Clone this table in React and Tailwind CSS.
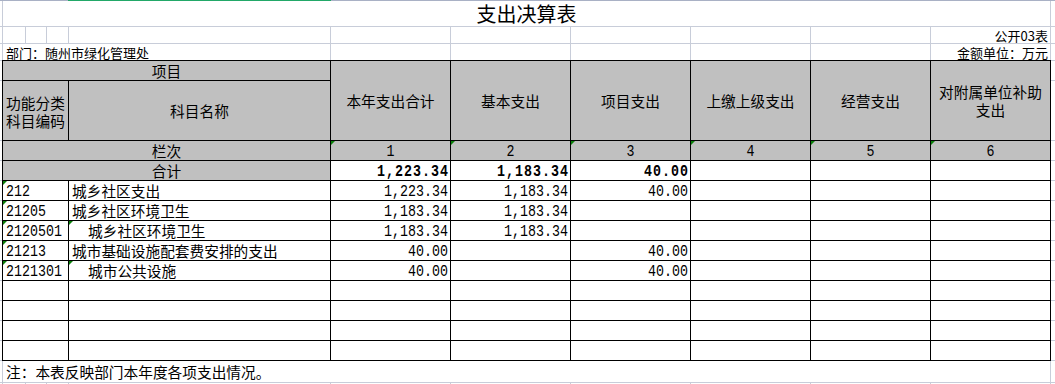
import React from "react";

function Tri() {
  return (
    <span className="absolute left-0 top-0 h-0 w-0 border-t-[4px] border-r-[4px] border-t-[#0a800a] border-r-transparent" />
  );
}

function C({ cls = "", tri = false, children }) {
  return (
    <div className={"relative flex items-center border-r border-b border-black " + cls}>
      {tri && <Tri />}
      {children}
    </div>
  );
}

function Gut({ top = false }) {
  return <div className={top ? "border-t border-b border-[#c8cdd9]" : "border-b border-[#c8cdd9]"} />;
}

function Num({ children, bold = false }) {
  return (
    <span
      className={
        bold
          ? "ml-auto inline-block origin-center scale-y-[1.2] pt-[3px] pr-[1px] font-['Liberation_Mono',monospace] text-[13.33px] font-bold tracking-[1px]"
          : "ml-auto inline-block origin-center scale-y-[1.2] pt-[3px] pr-[2px] font-['Liberation_Mono',monospace] text-[13.33px]"
      }
    >
      {children}
    </span>
  );
}

function Code({ children }) {
  return (
    <span className="inline-block origin-center scale-y-[1.2] pt-[3px] pl-[3px] font-['Liberation_Mono',monospace] text-[13.33px]">
      {children}
    </span>
  );
}

const rows = [
  { code: "212", name: "城乡社区支出", indent: false, v: ["1,223.34", "1,183.34", "40.00"] },
  { code: "21205", name: "城乡社区环境卫生", indent: false, v: ["1,183.34", "1,183.34", ""] },
  { code: "2120501", name: "城乡社区环境卫生", indent: true, v: ["1,183.34", "1,183.34", ""] },
  { code: "21213", name: "城市基础设施配套费安排的支出", indent: false, v: ["40.00", "", "40.00"] },
  { code: "2121301", name: "城市公共设施", indent: true, v: ["40.00", "", "40.00"] },
];

const heads = ["本年支出合计", "基本支出", "项目支出", "上缴上级支出", "经营支出"];

export default function App() {
  return (
    <div className="relative h-[384px] w-[1055px] overflow-hidden bg-white text-black font-['Noto_Sans_CJK_SC',sans-serif]">
      {/* selection marker on top edge */}
      <div className="absolute left-[68px] top-0 h-px w-[263px] bg-[#22a868]" />

      {/* title row */}
      <div className="grid h-[27px] grid-cols-[2px_1049px_4px] border-t border-b border-t-[#a9b1c5] border-b-[#c8cdd9]">
        <div />
        <div className="flex items-end justify-center border-l border-r border-[#c8cdd9] pb-[1px] text-[20px] leading-[22px]">
          支出决算表
        </div>
        <div />
      </div>

      {/* meta row 1 */}
      <div className="grid h-[17px] grid-cols-[2px_24px_21px_22px_262px_120px_120px_120px_120px_120px_120px_4px] border-b border-[#c8cdd9] text-[13px]">
        <div />
        <div className="border-l border-r border-[#c8cdd9]" />
        <div className="border-r border-[#c8cdd9]" />
        <div className="border-r border-[#c8cdd9]" />
        <div className="border-r border-[#c8cdd9]" />
        <div className="border-r border-[#c8cdd9]" />
        <div className="border-r border-[#c8cdd9]" />
        <div className="border-r border-[#c8cdd9]" />
        <div className="border-r border-[#c8cdd9]" />
        <div className="border-r border-[#c8cdd9]" />
        <div className="flex items-end justify-end border-r border-[#c8cdd9] pr-[2px] leading-[15px]">公开03表</div>
        <div />
      </div>

      {/* meta row 2 */}
      <div className="grid h-[16px] grid-cols-[2px_24px_21px_22px_262px_120px_120px_120px_120px_120px_120px_4px] text-[13px]">
        <div />
        <div className="col-span-4 flex items-end whitespace-nowrap border-l border-r border-[#c8cdd9] pl-[3px] leading-[15px]">
          部门：随州市绿化管理处
        </div>
        <div className="border-r border-[#c8cdd9]" />
        <div className="border-r border-[#c8cdd9]" />
        <div className="border-r border-[#c8cdd9]" />
        <div className="border-r border-[#c8cdd9]" />
        <div className="border-r border-[#c8cdd9]" />
        <div className="flex items-end justify-end border-r border-[#c8cdd9] pr-[2px] leading-[15px]">金额单位：万元</div>
        <div />
      </div>

      {/* main table */}
      <div className="grid grid-cols-[2px_67px_262px_120px_120px_120px_120px_120px_120px_4px] grid-rows-[21px_60px_repeat(11,20px)] text-[14.7px] leading-[18px]">
        {/* header row 1 */}
        <Gut top />
        <C cls="col-span-2 justify-center border-l border-t bg-[#c0c0c0]">
          <span>项目</span>
        </C>
        {heads.map((h) => (
          <C key={h} cls="row-span-2 justify-center border-t bg-[#c0c0c0]">
            <span>{h}</span>
          </C>
        ))}
        <C cls="row-span-2 justify-center border-t bg-[#c0c0c0]">
          <div className="flex flex-col items-center">
            <span className="leading-[18px]">对附属单位补助</span>
            <span className="leading-[18px]">支出</span>
          </div>
        </C>
        <Gut top />

        {/* header row 2 */}
        <Gut />
        <C cls="justify-center border-l bg-[#c0c0c0]">
          <div className="flex flex-col items-center pt-[2px]">
            <span className="leading-[18px]">功能分类</span>
            <span className="leading-[18px]">科目编码</span>
          </div>
        </C>
        <C cls="justify-center bg-[#c0c0c0]">
          <span>科目名称</span>
        </C>
        <Gut />

        {/* 栏次 row */}
        <Gut />
        <C cls="col-span-2 justify-center border-l bg-[#c0c0c0]">
          <span>栏次</span>
        </C>
        {["1", "2", "3", "4", "5", "6"].map((n) => (
          <C key={n} tri cls="justify-center bg-[#c0c0c0]">
            <span className="inline-block origin-center scale-y-[1.2] pt-[3px] font-['Liberation_Mono',monospace] text-[13.33px]">
              {n}
            </span>
          </C>
        ))}
        <Gut />

        {/* 合计 row */}
        <Gut />
        <C cls="col-span-2 justify-center border-l bg-[#c0c0c0]">
          <span>合计</span>
        </C>
        <C>
          <Num bold>1,223.34</Num>
        </C>
        <C>
          <Num bold>1,183.34</Num>
        </C>
        <C>
          <Num bold>40.00</Num>
        </C>
        <C />
        <C />
        <C />
        <Gut />

        {/* data rows */}
        {rows.map((r) => (
          <React.Fragment key={r.code}>
            <Gut />
            <C tri cls="border-l">
              <Code>{r.code}</Code>
            </C>
            <C tri={r.indent}>
              <span className={r.indent ? "whitespace-nowrap pl-[19px]" : "whitespace-nowrap pl-[3px]"}>{r.name}</span>
            </C>
            {r.v.map((v, i) => (
              <C key={i}>{v && <Num>{v}</Num>}</C>
            ))}
            <C />
            <C />
            <C />
            <Gut />
          </React.Fragment>
        ))}

        {/* empty rows */}
        {[0, 1, 2, 3].map((k) => (
          <React.Fragment key={"e" + k}>
            <Gut />
            <C cls="border-l" />
            <C />
            <C />
            <C />
            <C />
            <C />
            <C />
            <C />
            <Gut />
          </React.Fragment>
        ))}
      </div>

      {/* footer note row */}
      <div className="grid h-[22px] grid-cols-[2px_1049px_4px] border-b border-[#c8cdd9]">
        <div />
        <div className="flex items-center whitespace-nowrap border-l border-r border-[#c8cdd9] pl-[3px] text-[14.7px] leading-[18px]">
          注：本表反映部门本年度各项支出情况。
        </div>
        <div />
      </div>

      {/* next sheet row (partially visible) */}
      <div className="grid h-[4px] grid-cols-[2px_24px_21px_22px_262px_120px_120px_120px_120px_120px_120px_4px]">
        <div />
        <div className="border-l border-r border-[#c8cdd9]" />
        <div className="border-r border-[#c8cdd9]" />
        <div className="border-r border-[#c8cdd9]" />
        <div className="border-r border-[#c8cdd9]" />
        <div className="border-r border-[#c8cdd9]" />
        <div className="border-r border-[#c8cdd9]" />
        <div className="border-r border-[#c8cdd9]" />
        <div className="border-r border-[#c8cdd9]" />
        <div className="border-r border-[#c8cdd9]" />
        <div className="border-r border-[#c8cdd9]" />
        <div />
      </div>
    </div>
  );
}
